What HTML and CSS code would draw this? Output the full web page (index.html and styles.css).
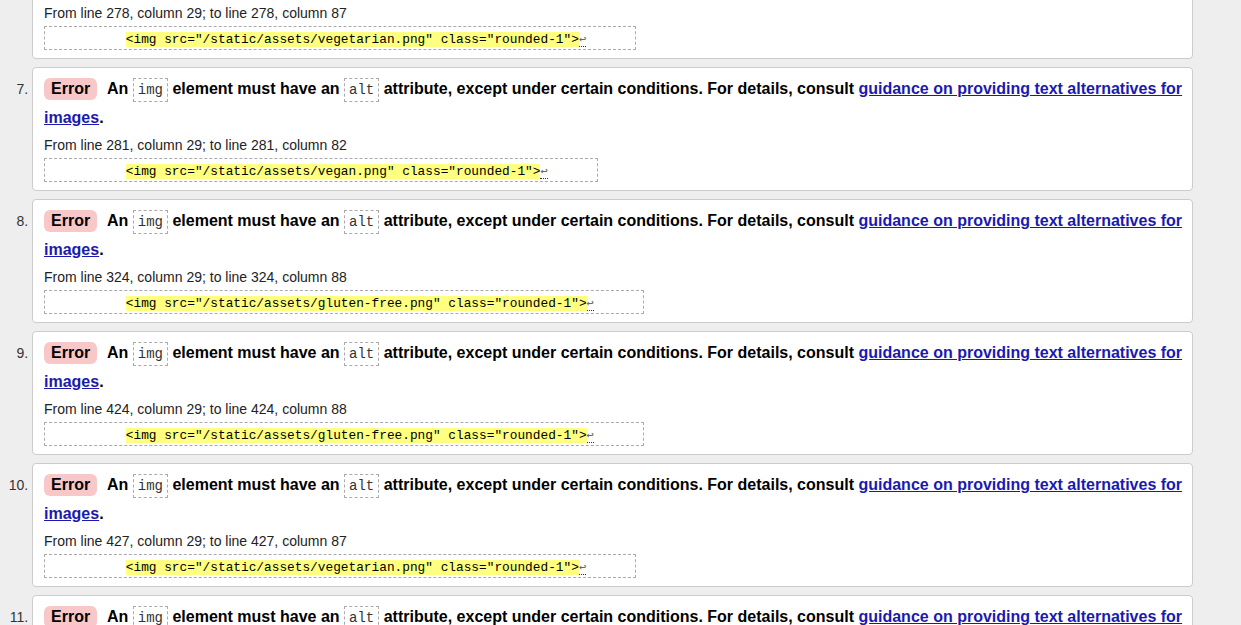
FILE: index.html
```html
<!DOCTYPE html>
<html>
<head>
<meta charset="utf-8">
<link rel="stylesheet" href="styles.css">
</head>
<body>
<ol class="messages" start="6">
  <li class="msg">
    <p class="title"><strong class="badge">Error</strong> <span>An <code class="tok">img</code> element must have an <code class="tok">alt</code> attribute, except under certain conditions. For details, consult <a href="#">guidance on providing text alternatives for images</a>.</span></p>
    <p class="loc">From line 278, column 29; to line 278, column 87</p>
    <p class="extract"><code>          <b>&lt;img src="/static/assets/vegetarian.png" class="rounded-1"&gt;</b><span class="lf">↩</span></code></p>
  </li>
  <li class="msg">
    <p class="title"><strong class="badge">Error</strong> <span>An <code class="tok">img</code> element must have an <code class="tok">alt</code> attribute, except under certain conditions. For details, consult <a href="#">guidance on providing text alternatives for images</a>.</span></p>
    <p class="loc">From line 281, column 29; to line 281, column 82</p>
    <p class="extract"><code>          <b>&lt;img src="/static/assets/vegan.png" class="rounded-1"&gt;</b><span class="lf">↩</span></code></p>
  </li>
  <li class="msg">
    <p class="title"><strong class="badge">Error</strong> <span>An <code class="tok">img</code> element must have an <code class="tok">alt</code> attribute, except under certain conditions. For details, consult <a href="#">guidance on providing text alternatives for images</a>.</span></p>
    <p class="loc">From line 324, column 29; to line 324, column 88</p>
    <p class="extract"><code>          <b>&lt;img src="/static/assets/gluten-free.png" class="rounded-1"&gt;</b><span class="lf">↩</span></code></p>
  </li>
  <li class="msg">
    <p class="title"><strong class="badge">Error</strong> <span>An <code class="tok">img</code> element must have an <code class="tok">alt</code> attribute, except under certain conditions. For details, consult <a href="#">guidance on providing text alternatives for images</a>.</span></p>
    <p class="loc">From line 424, column 29; to line 424, column 88</p>
    <p class="extract"><code>          <b>&lt;img src="/static/assets/gluten-free.png" class="rounded-1"&gt;</b><span class="lf">↩</span></code></p>
  </li>
  <li class="msg">
    <p class="title"><strong class="badge">Error</strong> <span>An <code class="tok">img</code> element must have an <code class="tok">alt</code> attribute, except under certain conditions. For details, consult <a href="#">guidance on providing text alternatives for images</a>.</span></p>
    <p class="loc">From line 427, column 29; to line 427, column 87</p>
    <p class="extract"><code>          <b>&lt;img src="/static/assets/vegetarian.png" class="rounded-1"&gt;</b><span class="lf">↩</span></code></p>
  </li>
  <li class="msg">
    <p class="title"><strong class="badge">Error</strong> <span>An <code class="tok">img</code> element must have an <code class="tok">alt</code> attribute, except under certain conditions. For details, consult <a href="#">guidance on providing text alternatives for images</a>.</span></p>
    <p class="loc">From line 430, column 29; to line 430, column 82</p>
    <p class="extract"><code>          <b>&lt;img src="/static/assets/vegan.png" class="rounded-1"&gt;</b><span class="lf">↩</span></code></p>
  </li>
</ol>
</body>
</html>
```

FILE: styles.css
```css
html, body {
  margin: 0;
  padding: 0;
  background: #eeeeee;
  font-family: "Liberation Sans", Arial, sans-serif;
  color: #000;
  overflow: hidden;
}

.messages {
  list-style: decimal outside;
  margin: -65px 48px 0 32px;
  padding: 0;
}

.msg {
  background: #fff;
  border: 1px solid #cccccc;
  border-radius: 4px;
  padding: 6px 0 8px 11px;
  margin: 0 0 8px 0;
}

.msg::marker {
  font-size: 14px;
  color: #333;
  font-weight: normal;
}

.title {
  margin: 0;
  font-size: 16px;
  line-height: 29px;
  font-weight: bold;
}

.badge {
  display: inline-block;
  background: #f8c8c8;
  border-radius: 6px;
  line-height: 22px;
  padding: 0 7px;
  margin-right: 6px;
}

.tok {
  display: inline-block;
  font-family: "Liberation Mono", "DejaVu Sans Mono", monospace;
  font-weight: normal;
  font-size: 14px;
  line-height: 22px;
  padding: 0 4px;
  border: 1px dashed #aaaaaa;
  color: #333;
}

.title a {
  color: #1a1ab0;
  text-decoration: underline;
}

.loc {
  margin: 4px 0 0 0;
  font-size: 14px;
  line-height: 18px;
  color: #222;
}

.extract {
  margin: 4px 0 0 0;
  width: fit-content;
  height: 22px;
  border: 1px dashed #aaaaaa;
  line-height: 22px;
  padding: 0 49px 0 4px;
  white-space: pre;
  overflow: hidden;
}

.extract code {
  font-family: "Liberation Mono", "DejaVu Sans Mono", monospace;
  font-size: 12.8px;
  line-height: 22px;
  color: #000;
}

.extract b {
  font-weight: normal;
  background: #ffff80;
}

.lf {
  font-family: "DejaVu Sans Mono", monospace;
  font-size: 12px;
  line-height: 14px;
  color: #666;
  border-bottom: 1px dotted #333;
}
```
